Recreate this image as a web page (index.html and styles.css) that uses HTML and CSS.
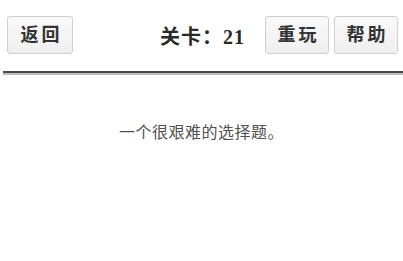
FILE: index.html
```html
<!DOCTYPE html>
<html lang="zh">
<head>
<meta charset="utf-8">
<title>关卡 21</title>
<link rel="stylesheet" href="styles.css">
</head>
<body>
<header class="top">
  <button class="btn">返回</button>
  <div class="level">关卡：21</div>
  <div class="actions">
    <button class="btn btn-small">重玩</button>
    <button class="btn btn-small">帮助</button>
  </div>
</header>
<div class="rule"></div>
<p class="question">一个很艰难的选择题。</p>
</body>
</html>
```
FILE: styles.css
```css
html, body {
  margin: 0;
  padding: 0;
  background: #ffffff;
}
body {
  width: 403px;
  height: 261px;
  overflow: hidden;
  font-family: "Liberation Serif", "Noto Sans CJK SC", serif;
}
.top {
  display: flex;
  align-items: center;
  padding: 16px 5px 0 7px;
}
.btn {
  box-sizing: border-box;
  height: 38px;
  width: 66px;
  padding: 0 0 0 3px;
  border: 1px solid #cfcfcf;
  border-radius: 3px;
  background: linear-gradient(#f9f9f9, #efefef);
  color: #333333;
  font-family: "Liberation Serif", "Noto Sans CJK SC", serif;
  font-weight: 700;
  font-size: 18px;
  letter-spacing: 3px;
  line-height: 1;
}
.btn-small {
  width: 64px;
}
.level {
  margin-left: auto;
  margin-right: 20px;
  font-weight: 700;
  font-size: 20px;
  letter-spacing: 1px;
  color: #2a2a2a;
}
.actions {
  display: flex;
  gap: 5px;
}
.rule {
  margin: 17px 0 0 3px;
  height: 2px;
  border-top: 2px solid #4a4a4a;
  background: #bdbdbd;
}
.question {
  margin: 44px 0 0 0;
  text-align: center;
  font-family: "Noto Sans CJK SC", sans-serif;
  font-size: 16px;
  letter-spacing: 0.5px;
  line-height: 24px;
  color: #505050;
}
```
